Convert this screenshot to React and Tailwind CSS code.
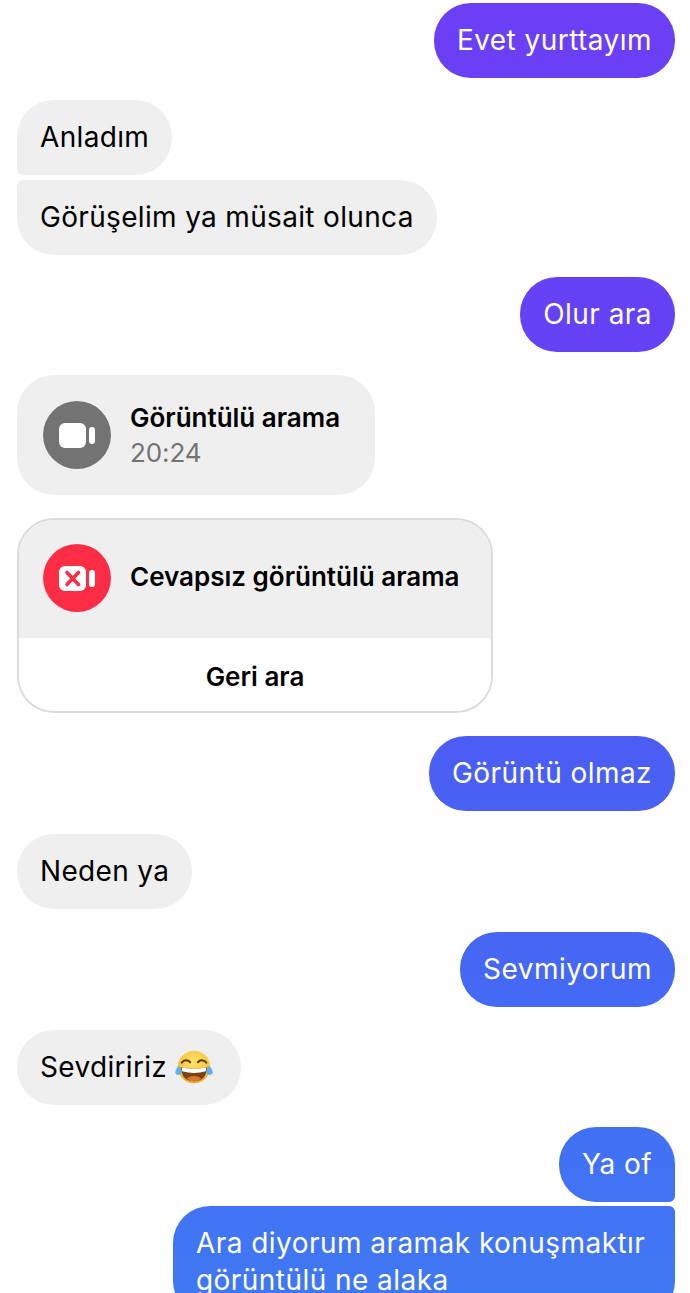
import React from 'react';

const font = "font-['Inter','Liberation_Sans',sans-serif]";

// burbuja enviada: el degradado va fijo a la ventana, de violeta a azul
const sentBg = 'bg-fixed bg-[linear-gradient(to_bottom,#6c3ff5_0%,#6442f6_27%,#4a5ff4_60%,#4568f4_75%,#3f78f3_100%)] text-white tracking-[0.45px]';

const bubble = 'shrink-0 px-[23px] py-[19px] text-[28px] leading-[37px] rounded-[37px]';

const Sent = ({ children, className = '' }) => (
  <div className={`self-end max-w-[502px] ${bubble} ${sentBg} ${className}`}>
    {children}
  </div>
);

const Received = ({ children, className = '' }) => (
  <div className={`self-start tracking-[0.33px] ${bubble} bg-[#efefef] text-black ${className}`}>
    {children}
  </div>
);

const VideoIcon = ({ missed }) => (
  <div className={`flex h-[68px] w-[68px] shrink-0 items-center justify-center rounded-full ${missed ? 'bg-[#fd2d46]' : 'bg-[#737373]'}`}>
    <svg width="36" height="25" viewBox="0 0 36 25">
      <rect x="0" y="0" width="27" height="25" rx="6" fill="#fff" />
      <rect x="30" y="4" width="6" height="17" rx="3" fill="#fff" />
      {missed && (
        <path d="M8 6.5 L19.5 18.5 M19.5 6.5 L8 18.5" stroke="#fd2d46" strokeWidth="3.6" strokeLinecap="round" />
      )}
    </svg>
  </div>
);

const LaughEmoji = () => (
  <svg className="inline-block align-[-8px] mr-[5px]" width="38" height="36" viewBox="0 0 40 36">
    <defs>
      <radialGradient id="cara" cx="50%" cy="35%" r="70%">
        <stop offset="0%" stopColor="#fde26a" />
        <stop offset="70%" stopColor="#f8c53c" />
        <stop offset="100%" stopColor="#e09a25" />
      </radialGradient>
    </defs>
    <circle cx="20" cy="18" r="17" fill="url(#cara)" />
    <path d="M7 13.5 Q11.5 8.5 16 13 M24 13 Q28.5 8.5 33 13.5" fill="none" stroke="#5b3a12" strokeWidth="2" strokeLinecap="round" />
    <path d="M6 18 Q20 22 34 18 Q33 33 20 33 Q7 33 6 18 Z" fill="#7a4312" />
    <path d="M7 18.3 Q20 22 33 18.3 L32.4 22.5 Q20 26 7.6 22.5 Z" fill="#fff" />
    <path d="M12 30 Q20 25 28 30 Q24 33 20 33 Q16 33 12 30 Z" fill="#d9772b" />
    <path d="M4 16.5 Q7.5 21 7 24 A3.6 3.6 0 0 1 0.2 24 Q0.5 20 4 16.5 Z" fill="#5fb0ee" />
    <path d="M36 16.5 Q32.5 21 33 24 A3.6 3.6 0 0 0 39.8 24 Q39.5 20 36 16.5 Z" fill="#5fb0ee" />
  </svg>
);

export default function App() {
  return (
    <div className={`${font} h-[1293px] w-[690px] overflow-hidden bg-white pl-[17px] pr-[15px] pt-[3px] flex flex-col`}>
      <Sent>Evet yurttayım</Sent>

      <Received className="mt-[22px] rounded-bl-[6px]">Anladım</Received>
      <Received className="mt-[5px] rounded-tl-[6px]">Görüşelim ya müsait olunca</Received>

      <Sent className="mt-[22px]">Olur ara</Sent>

      {/* llamada de video */}
      <div className="mt-[23px] flex h-[120px] w-[358px] shrink-0 items-center gap-[19px] rounded-[37px] bg-[#efefef] pl-[26px]">
        <VideoIcon />
        <div>
          <div className="text-[26px] leading-[35px] font-semibold text-black">Görüntülü arama</div>
          <div className="text-[26px] leading-[35px] tracking-[-0.1px] text-[#737373]">20:24</div>
        </div>
      </div>

      {/* llamada perdida */}
      <div className="mt-[23px] w-[476px] shrink-0 overflow-hidden rounded-[37px] border-2 border-[#dbdbdb]">
        <div className="flex h-[118px] items-center gap-[19px] bg-[#efefef] pb-[2px] pl-[24px]">
          <VideoIcon missed />
          <div className="pb-[3px] text-[26px] leading-[35px] font-semibold text-black">Cevapsız görüntülü arama</div>
        </div>
        <div className="flex h-[73px] items-center justify-center bg-white pt-[3px] text-[26px] font-semibold text-black">
          Geri ara
        </div>
      </div>

      <Sent className="mt-[23px]">Görüntü olmaz</Sent>
      <Received className="mt-[23px]">Neden ya</Received>
      <Sent className="mt-[23px]">Sevmiyorum</Sent>
      <Received className="mt-[23px]">Sevdiririz <LaughEmoji /></Received>

      <Sent className="mt-[22px] rounded-br-[6px]">Ya of</Sent>
      <Sent className="mt-[4px] rounded-tr-[6px]">
        Ara diyorum aramak konuşmaktır görüntülü ne alaka
      </Sent>
    </div>
  );
}
